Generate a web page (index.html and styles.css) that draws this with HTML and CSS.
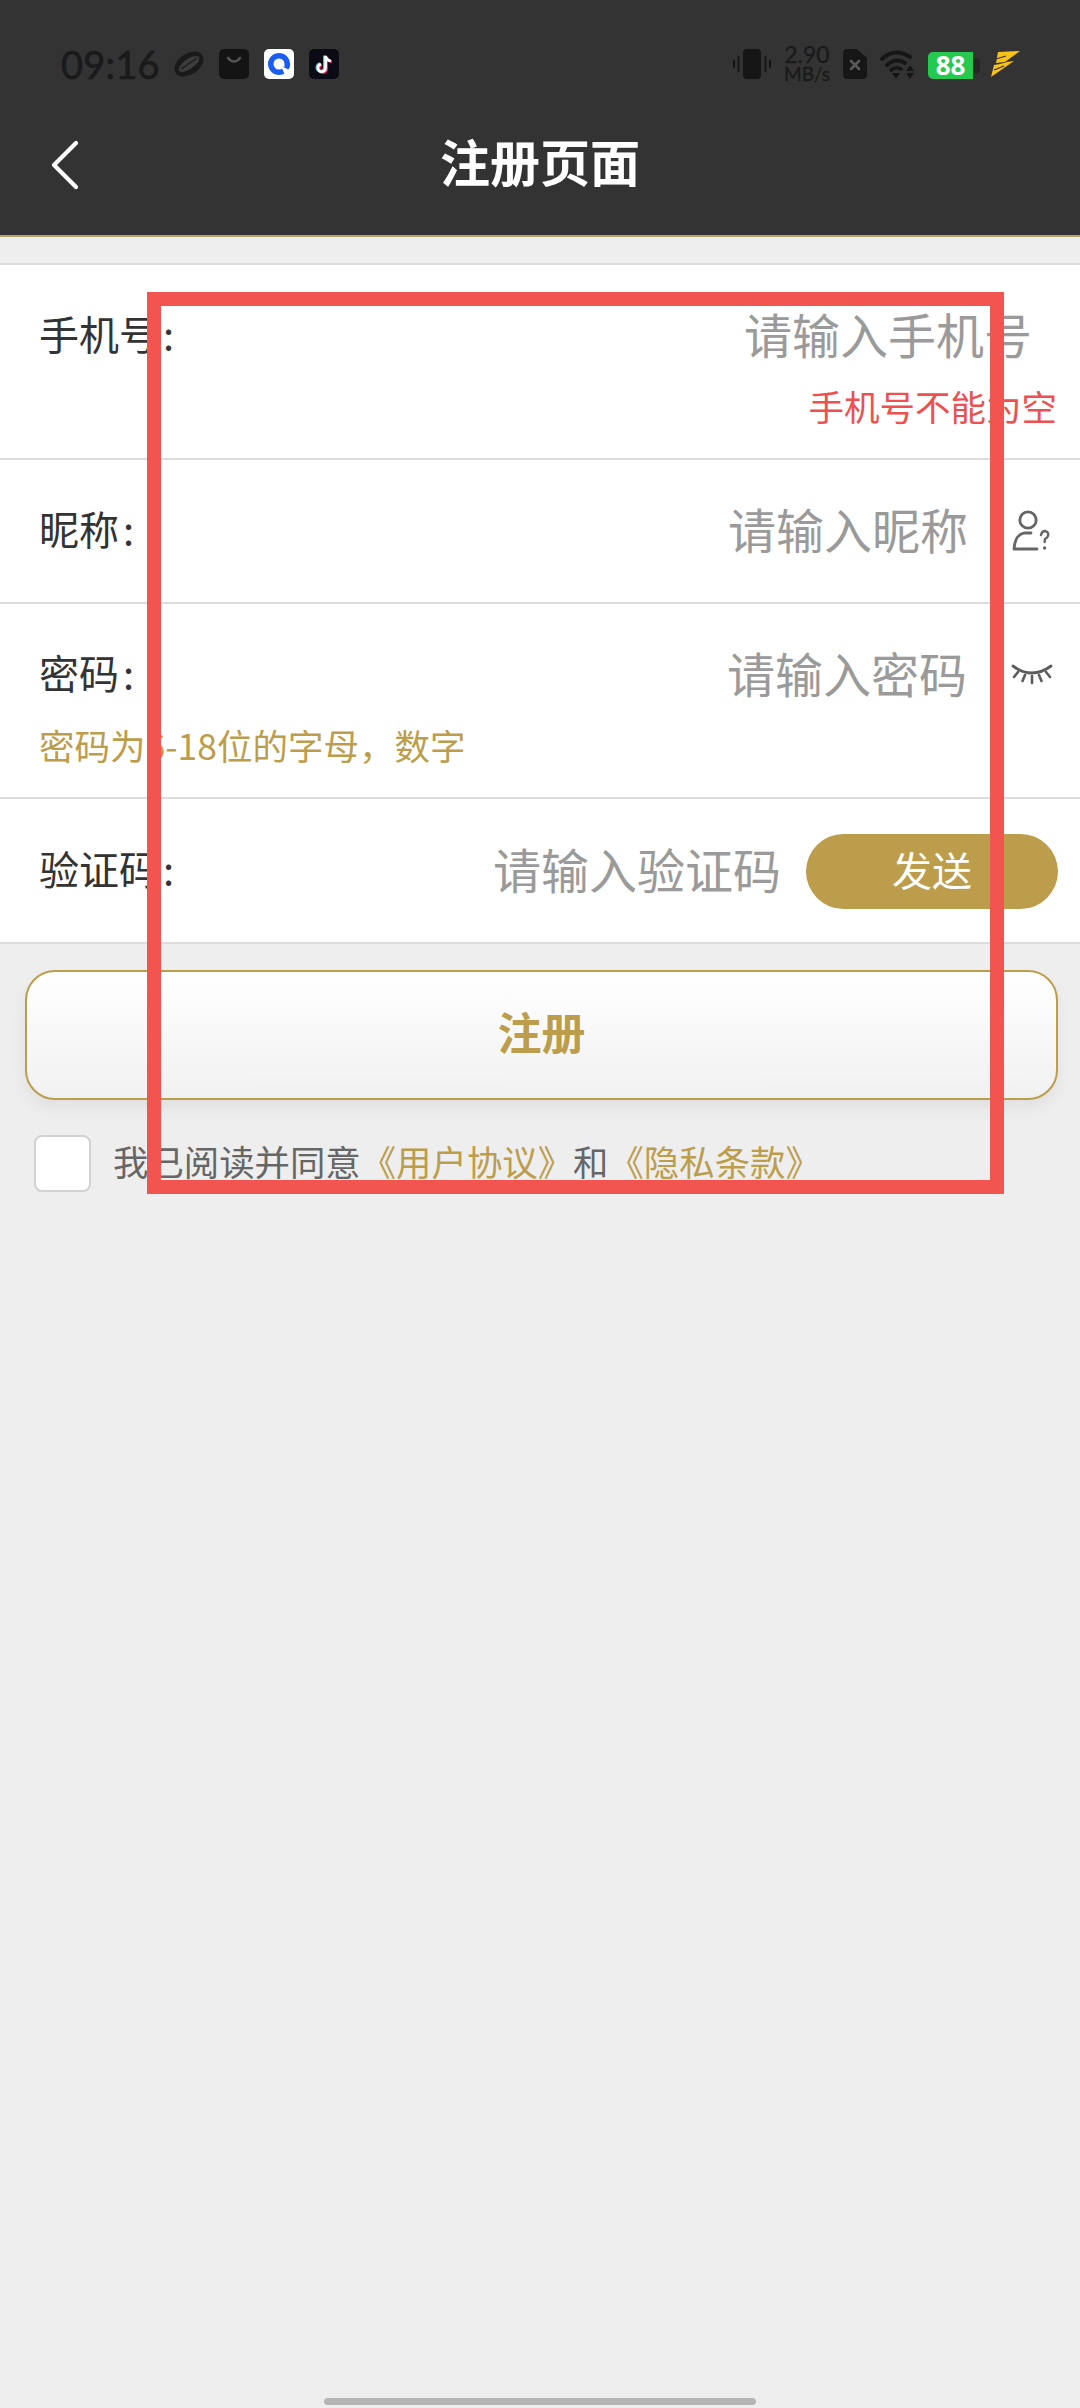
FILE: index.html
```html
<!DOCTYPE html>
<html lang="zh">
<head>
<meta charset="utf-8">
<title>注册页面</title>
<link rel="stylesheet" href="styles.css">
</head>
<body>
<div class="page">
  <header class="header">
    <div class="status">
      <div class="status-left">
        <span class="time">09:16</span>
        <svg class="ic-planet" viewBox="0 0 30 28"><ellipse cx="15" cy="14" rx="16" ry="10.5" transform="rotate(-35 15 14)" fill="#1a1a1a"/><ellipse cx="15" cy="14" rx="12" ry="5" transform="rotate(-35 15 14)" fill="#3c3c3c"/><path d="M7 19 L23 8" stroke="#1a1a1a" stroke-width="1.2"/></svg>
        <svg class="ic-app" viewBox="0 0 30 30"><rect width="30" height="30" rx="5" fill="#141414"/><path d="M9 9 Q15 16 21 9" fill="none" stroke="#555" stroke-width="2.6" stroke-linecap="round"/></svg>
        <svg class="ic-app" viewBox="0 0 30 30"><rect width="30" height="30" rx="5" fill="#fff"/><circle cx="15" cy="15" r="11" fill="#1c5cf0"/><circle cx="15" cy="15" r="5.5" fill="#fff"/><path d="M16 15 L27 19 L21 26 Z" fill="#fff"/><path d="M19 18 L26.2 15 A11 11 0 0 1 24.5 20.5 Z" fill="#1c5cf0"/></svg>
        <svg class="ic-app" viewBox="0 0 30 30"><rect width="30" height="30" rx="5" fill="#0b0b16"/><path d="M16.6 7 V19 A3.8 3.8 0 1 1 12 15.2 M16.6 7 Q17.5 11.5 22 12" fill="none" stroke="#ee1d52" stroke-width="3" transform="translate(1 .8)"/><path d="M16.6 7 V19 A3.8 3.8 0 1 1 12 15.2 M16.6 7 Q17.5 11.5 22 12" fill="none" stroke="#69c9d0" stroke-width="3" transform="translate(-1 -.4)"/><path d="M16.6 7 V19 A3.8 3.8 0 1 1 12 15.2 M16.6 7 Q17.5 11.5 22 12" fill="none" stroke="#fff" stroke-width="2.6"/></svg>
      </div>
      <div class="status-right">
        <svg class="ic-vibrate" viewBox="0 0 38 30"><rect x="10" y="0" width="18" height="30" rx="4" fill="#161616"/><path d="M5.5 8 V22 M1 12 V18 M32.5 8 V22 M37 12 V18" stroke="#161616" stroke-width="2" stroke-linecap="round"/></svg>
        <div class="speed"><span class="speed-num">2.90</span><span class="speed-unit">MB/s</span></div>
        <svg class="ic-sim" viewBox="0 0 24 30"><path d="M4 0 H14 L24 9 V26 A4 4 0 0 1 20 30 H4 A4 4 0 0 1 0 26 V4 A4 4 0 0 1 4 0 Z" fill="#161616"/><path d="M8 12 L16 20 M16 12 L8 20" stroke="#5a5a5a" stroke-width="2.6" stroke-linecap="round"/></svg>
        <svg class="ic-wifi" viewBox="0 0 37 29"><path d="M2 9 Q15 -3 30 7" fill="none" stroke="#161616" stroke-width="4" stroke-linecap="round"/><path d="M7 15 Q16 7 25 13" fill="none" stroke="#161616" stroke-width="4" stroke-linecap="round"/><path d="M11 20 Q16 16 21 19" fill="none" stroke="#161616" stroke-width="3.6" stroke-linecap="round"/><path d="M12 23 H20 L16 29 Z" fill="#161616"/><path d="M30 15 L34 21 H26 Z M26 23 H34 L30 29 Z" fill="#161616"/></svg>
        <div class="battery"><span class="battery-body">88</span><span class="battery-tip"></span></div>
        <svg class="ic-bolt" viewBox="0 0 30 26"><path d="M8 1 L30 0 L15 11 L6 12 Z" fill="#f7c318"/><path d="M17 11 L24 10 L1 26 L4 14 L10 13 Z" fill="#f7c318"/><path d="M6 8 L16 5 M4 19 L14 15" stroke="#333" stroke-width="1.3"/></svg>
      </div>
    </div>
    <nav class="nav">
      <div class="nav-side">
        <svg class="ic-back" viewBox="0 0 30 50"><path d="M26 3 L4 25 L26 47" fill="none" stroke="#fff" stroke-width="4.2" stroke-linecap="round" stroke-linejoin="round"/></svg>
      </div>
      <h1 class="title">注册页面</h1>
      <div class="nav-side"></div>
    </nav>
  </header>

  <main class="form">
    <section class="row">
      <div class="row-main">
        <span class="label">手机号<span class="colon">:</span></span>
        <span class="placeholder placeholder-end">请输入手机号</span>
      </div>
      <div class="note note-error">手机号不能为空</div>
    </section>
    <section class="row">
      <div class="row-main">
        <span class="label">昵称<span class="colon">:</span></span>
        <span class="placeholder placeholder-icon">请输入昵称</span>
        <svg class="ic-person" viewBox="0 0 38 42"><circle cx="16" cy="10" r="8.2" fill="none" stroke="#666" stroke-width="2.8"/><path d="M19 23 H12 Q3 25 2 39 H25" fill="none" stroke="#666" stroke-width="2.8" stroke-linecap="round" stroke-linejoin="round"/><path d="M29 25 Q30 21 33 21 Q37 22 36 26 Q35 28 33 29 L32.6 32" fill="none" stroke="#666" stroke-width="2.4" stroke-linecap="round"/><circle cx="32.6" cy="38" r="1.7" fill="#666"/></svg>
      </div>
    </section>
    <section class="row">
      <div class="row-main">
        <span class="label">密码<span class="colon">:</span></span>
        <span class="placeholder placeholder-icon">请输入密码</span>
        <svg class="ic-eye" viewBox="0 0 42 22"><path d="M2 3 Q21 17 40 3" fill="none" stroke="#5c5c5c" stroke-width="2.8" stroke-linecap="round"/><path d="M7 9 L3 14 M14 12 L11.5 18 M21 13 V20 M28 12 L30.5 18 M35 9 L39 14" stroke="#5c5c5c" stroke-width="2.6" stroke-linecap="round"/></svg>
      </div>
      <div class="note note-hint">密码为6-18位的字母，数字</div>
    </section>
    <section class="row row-code">
      <div class="row-main">
        <span class="label">验证码<span class="colon">:</span></span>
        <span class="placeholder placeholder-code">请输入验证码</span>
        <button class="send">发送</button>
      </div>
    </section>
  </main>

  <div class="actions">
    <button class="submit">注册</button>
    <div class="agree">
      <span class="checkbox"></span>
      <span class="agree-text">我已阅读并同意<span class="link">《用户协议》</span>和<span class="link">《隐私条款》</span></span>
    </div>
  </div>

  <div class="home-indicator"></div>
  <div class="annotation"></div>
</div>
</body>
</html>
```
FILE: styles.css
```css
* { box-sizing: border-box; }
html, body { margin: 0; padding: 0; }
body { background: #eeeeee; font-family: "Noto Sans CJK SC", "Noto Sans", sans-serif; }

.page {
  position: relative;
  width: 1080px;
  height: 2408px;
  background: #eeeeee;
  display: flex;
  flex-direction: column;
  overflow: hidden;
}

.header {
  height: 237px;
  background: #333333;
  border-bottom: 2px solid #b7a168;
  flex: none;
}

.status {
  display: flex;
  justify-content: space-between;
  align-items: center;
  height: 30px;
  margin-top: 49px;
  padding: 0 60px 0 61px;
}
.status-left, .status-right { display: flex; align-items: center; }
.time {
  font-family: Lato, sans-serif;
  font-size: 38px;
  line-height: 30px;
  color: #1a1a1a;
  -webkit-text-stroke: .7px #1a1a1a;
  margin-right: 14px;
  letter-spacing: .2px;
}
.ic-planet { width: 30px; height: 28px; margin-right: 15px; }
.ic-app { width: 30px; height: 30px; margin-right: 15px; }
.ic-app:last-child { margin-right: 0; }
.ic-vibrate { width: 38px; height: 30px; margin-right: 11px; }
.speed { display: flex; flex-direction: column; align-items: center; width: 50px; margin-right: 11px; color: #1a1a1a; font-family: Lato, sans-serif; -webkit-text-stroke: .3px #1a1a1a; }
.speed-num { font-size: 23px; line-height: 20px; }
.speed-unit { font-size: 19px; line-height: 20px; }
.ic-sim { width: 24px; height: 30px; margin-right: 13px; }
.ic-wifi { width: 37px; height: 29px; margin-right: 11px; }
.battery { display: flex; align-items: center; margin-top: 3px; margin-right: 10px; }
.battery-body {
  width: 45px;
  height: 27px;
  background: #26c94f;
  border-radius: 5px 0 0 5px;
  color: #fff;
  font-family: "Open Sans", sans-serif;
  font-weight: 700;
  font-size: 26px;
  line-height: 27px;
  text-align: center;
}
.battery-tip { width: 7px; height: 15px; background: #262626; border-radius: 0 4px 4px 0; }
.ic-bolt { width: 30px; height: 26px; }

.nav {
  display: grid;
  grid-template-columns: 1fr auto 1fr;
  align-items: center;
  height: 72px;
  margin-top: 45px;
}
.nav-side { display: flex; align-items: center; padding-left: 50px; }
.ic-back { width: 30px; height: 50px; margin-top: 9px; }
.title {
  margin: 0;
  font-size: 50px;
  line-height: 72px;
  font-weight: 700;
  color: #ffffff;
}

.form {
  margin-top: 26px;
  flex: none;
  border-top: 2px solid #dcdcdc;
}
.row {
  background: #ffffff;
  border-bottom: 2px solid #dcdcdc;
  padding: 35px 22px 27px 39px;
}
.row-main { display: flex; align-items: center; height: 72px; }
.label { font-size: 40px; line-height: 72px; color: #333333; margin-right: auto; padding-bottom: 6px; }
.colon { margin-left: 4px; }
.placeholder { font-size: 48px; line-height: 72px; color: #9a9a9a; padding-bottom: 6px; }
.placeholder-end { margin-right: 26px; }
.placeholder-icon { margin-right: 44px; }
.placeholder-code { margin-right: 25px; }
.ic-person { width: 38px; height: 42px; margin-right: 8px; }
.ic-eye { width: 42px; height: 22px; margin-right: 5px; margin-top: -2px; }
.note { font-size: 35.5px; line-height: 48px; margin-top: 10px; padding-bottom: 1px; }
.note-error { color: #ec5050; text-align: right; padding-right: 1px; }
.note-hint { color: #bc9d4c; }
.row:nth-child(2) { padding-bottom: 35px; }
.row-code { padding-top: 36px; padding-bottom: 35px; }
.send {
  width: 252px;
  height: 75px;
  border: 0;
  border-radius: 38px;
  background: #bc9d4c;
  color: #fff;
  font-family: inherit;
  font-size: 40px;
  padding: 0 0 5px;
}

.actions { padding: 26px 22px 0 25px; }
.submit {
  display: block;
  width: 100%;
  height: 130px;
  border: 2px solid #bc9d4c;
  border-radius: 30px;
  background: linear-gradient(#ffffff, #f1f1f1);
  box-shadow: 0 8px 16px rgba(0, 0, 0, .06);
  color: #bc9d4c;
  font-family: inherit;
  font-size: 44px;
  font-weight: 700;
  padding: 0 0 9px;
}
.agree { display: flex; align-items: center; margin-top: 35px; padding-left: 9px; }
.checkbox {
  width: 57px;
  height: 57px;
  background: #fff;
  border: 2px solid #d2d2d2;
  border-radius: 8px;
  margin-right: 22px;
}
.agree-text { font-size: 35.4px; line-height: 48px; color: #666666; padding-bottom: 6px; }
.link { color: #bc9d4c; }

.home-indicator {
  width: 432px;
  height: 7px;
  background: #b5b5b5;
  border-radius: 4px;
  margin: auto auto 3px;
}

.annotation {
  position: absolute;
  left: 147px;
  top: 292px;
  width: 857px;
  height: 902px;
  border: 14px solid #f25450;
}
```
